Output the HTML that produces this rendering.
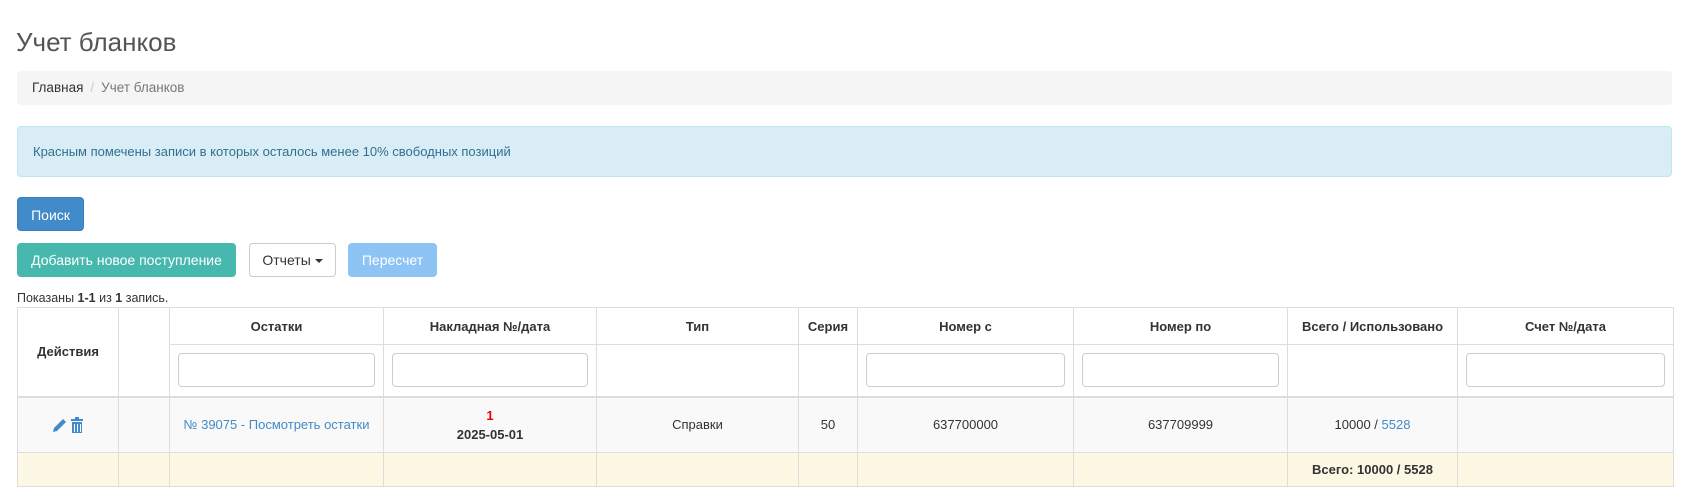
<!DOCTYPE html>
<html><head><meta charset="utf-8"><style>
*{box-sizing:border-box}
body{margin:0;width:1687px;height:494px;background:#fff;font-family:"Liberation Sans",sans-serif;color:#333;position:relative;overflow:hidden}
.a{position:absolute}
h1{position:absolute;left:16px;top:25px;margin:0;font-size:26px;font-weight:normal;color:#555;line-height:34px}
.bc{left:17px;top:71px;width:1655px;height:34px;background:#f5f5f5;border-radius:4px;font-size:13.5px;line-height:34px;padding-left:15px;color:#777}
.bc b{font-weight:normal;color:#333}
.bc i{font-style:normal;color:#ccc;padding:0 7px}
.al{left:17px;top:126px;width:1655px;height:51px;background:#d9edf7;border:1px solid #bce8f1;border-radius:4px;color:#31708f;font-size:13px;line-height:49px;padding-left:15px}
.btn{position:absolute;height:34px;line-height:34px;border-radius:4px;font-size:14px;color:#fff;text-align:center}
.sm{left:17px;top:298px;font-size:12.5px;line-height:14px;margin-top:-7px}
table{position:absolute;left:17px;top:307px;border-collapse:collapse;table-layout:fixed;width:1656px;font-size:13px}
td,th{border:1px solid #ddd;text-align:center;padding:0;vertical-align:middle}
th{font-weight:bold;color:#333}
.inp{display:block;margin:0 8px;height:34px;border:1px solid #ccc;border-radius:4px;background:#fff}
.dr td{background:#f9f9f9;height:56px}
.fr td{background:#fcf8e3;height:34px}
.lk{color:#428bca}
</style></head><body>
<h1>Учет бланков</h1>
<div class="a bc"><b>Главная</b><i>/</i>Учет бланков</div>
<div class="a al">Красным помечены записи в которых осталось менее 10% свободных позиций</div>
<div class="btn" style="left:17px;top:197px;width:67px;background:#428bca;border:1px solid #3a7fbd">Поиск</div>
<div class="btn" style="left:17px;top:243px;width:219px;background:#46b8ae">Добавить новое поступление</div>
<div class="btn" style="left:249px;top:243px;width:87px;background:#fff;border:1px solid #ccc;color:#333;line-height:32px">Отчеты <span style="display:inline-block;border-top:4px solid #333;border-left:4px solid transparent;border-right:4px solid transparent;vertical-align:middle"></span></div>
<div class="btn" style="left:348px;top:243px;width:89px;background:#8dc3f5">Пересчет</div>
<div class="a sm">Показаны <b>1-1</b> из <b>1</b> запись.</div>
<table>
<colgroup><col style="width:101px"><col style="width:51px"><col style="width:214px"><col style="width:213px"><col style="width:202px"><col style="width:59px"><col style="width:216px"><col style="width:214px"><col style="width:170px"><col style="width:216px"></colgroup>
<tr style="height:37px"><th rowspan="2">Действия</th><th rowspan="2"></th><th>Остатки</th><th>Накладная №/дата</th><th>Тип</th><th>Серия</th><th>Номер с</th><th>Номер по</th><th>Всего / Использовано</th><th>Счет №/дата</th></tr>
<tr style="height:52px;border-bottom:2px solid #ddd"><td><span class="inp"></span></td><td><span class="inp"></span></td><td></td><td></td><td><span class="inp"></span></td><td><span class="inp"></span></td><td></td><td><span class="inp"></span></td></tr>
<tr class="dr"><td><svg width="32" height="16" viewBox="0 0 32 16" style="vertical-align:middle"><path d="M1 15 L2 11 L11 2 L14 5 L5 14 Z" fill="#428bca"/><g fill="#428bca"><rect x="19" y="2" width="12" height="2"/><rect x="23" y="0" width="4" height="2"/><rect x="20" y="5" width="10" height="11"/></g><g fill="#f9f9f9"><rect x="22" y="7" width="1" height="8"/><rect x="25" y="7" width="1" height="8"/><rect x="28" y="7" width="1" height="8"/></g></svg></td><td></td><td class="lk">№ 39075 - Посмотреть остатки</td><td style="line-height:19px"><b style="color:#e00">1</b><br><b>2025-05-01</b></td><td>Справки</td><td>50</td><td>637700000</td><td>637709999</td><td>10000 / <span class="lk">5528</span></td><td></td></tr>
<tr class="fr"><td></td><td></td><td></td><td></td><td></td><td></td><td></td><td></td><td><b>Всего: 10000 / 5528</b></td><td></td></tr>
</table>
</body></html>
